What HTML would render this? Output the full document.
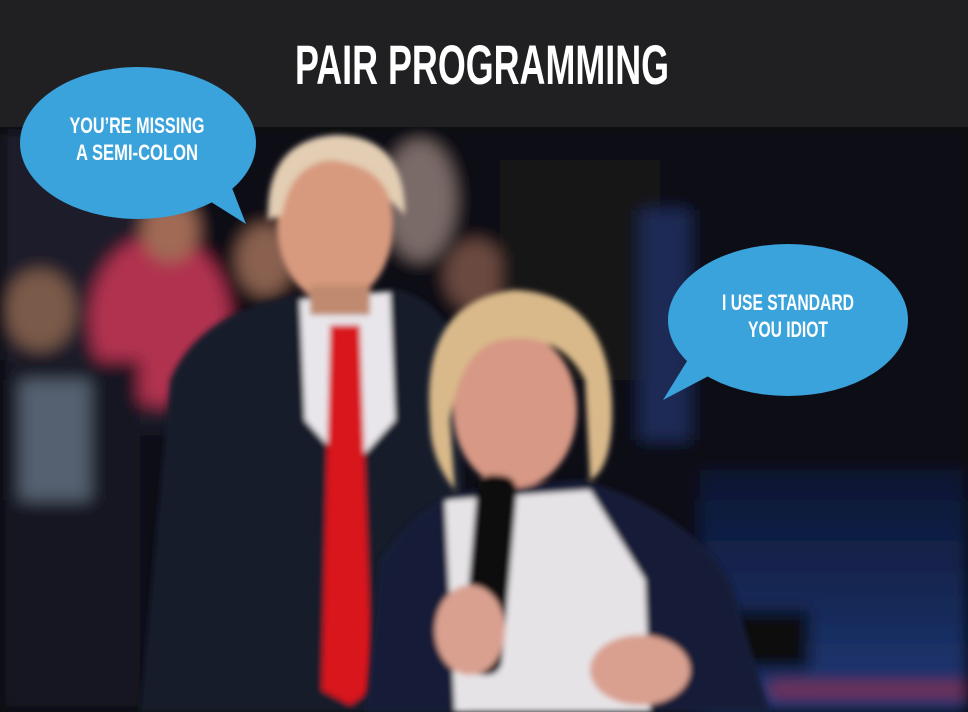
<!DOCTYPE html>
<html><head><meta charset="utf-8"><style>
html,body{margin:0;padding:0;background:#000;}
svg{display:block;}
text{font-family:"Liberation Sans Narrow","Liberation Sans",sans-serif;font-weight:bold;}
</style></head><body>
<svg width="968" height="712" viewBox="0 0 968 712" xmlns="http://www.w3.org/2000/svg">
<defs>
<filter id="b8"><feGaussianBlur stdDeviation="8"/></filter>
<filter id="b3"><feGaussianBlur stdDeviation="3"/></filter>
<linearGradient id="floor" x1="0" y1="0" x2="0" y2="1"><stop offset="0" stop-color="#0c1530"/><stop offset="1" stop-color="#1f3a78"/></linearGradient>
</defs>
<rect width="968" height="712" fill="#05060a"/>
<!-- background -->
<g filter="url(#b8)">
<rect x="0" y="127" width="968" height="585" fill="#0a0c14"/>
<rect x="700" y="470" width="268" height="242" fill="url(#floor)"/>
<rect x="0" y="130" width="200" height="300" fill="#1a1b2a"/>
<ellipse cx="160" cy="320" rx="70" ry="85" fill="#b0304f"/>
<ellipse cx="170" cy="230" rx="28" ry="32" fill="#a06a55"/>
<ellipse cx="40" cy="310" rx="35" ry="40" fill="#7a5a4a"/>
<rect x="0" y="360" width="140" height="352" fill="#141820"/>
<rect x="20" y="380" width="70" height="120" fill="#556070"/>
<ellipse cx="265" cy="260" rx="28" ry="35" fill="#8a6050"/>
<ellipse cx="420" cy="200" rx="35" ry="60" fill="#7a6a68"/>
<ellipse cx="475" cy="275" rx="30" ry="35" fill="#6a4a40"/>
<rect x="500" y="160" width="160" height="220" fill="#141418"/>
<rect x="640" y="210" width="50" height="230" fill="#1a2a55"/>
<rect x="730" y="610" width="80" height="60" fill="#111"/>
<rect x="770" y="685" width="198" height="10" fill="#8a2a3a"/>
</g>
<!-- Trump -->
<g filter="url(#b3)">
<path d="M140 712 L170 380 Q200 310 300 295 L400 290 Q450 305 460 360 L470 712 Z" fill="#151a2c"/>
<path d="M300 300 L390 292 L395 420 L350 470 L305 420 Z" fill="#e8e6ea"/>
<path d="M330 325 L360 325 L372 690 L350 705 L322 690 Z" fill="#d8131c"/>
<ellipse cx="335" cy="225" rx="58" ry="78" fill="#d89a7e"/>
<path d="M268 220 Q265 140 335 135 Q405 135 405 215 L390 200 Q380 165 330 160 Q290 165 282 215 Z" fill="#e3ceb3"/>
<rect x="310" y="285" width="60" height="30" fill="#c08a70"/>
</g>
<!-- Hillary -->
<g filter="url(#b3)">
<path d="M365 712 L380 560 Q420 500 470 490 L580 480 Q680 505 730 580 L770 712 Z" fill="#161d38"/>
<path d="M445 500 L590 490 L645 580 L650 712 L455 712 Z" fill="#e6e3e6"/>
<ellipse cx="515" cy="410" rx="62" ry="78" fill="#d79885"/>
<path d="M430 420 Q420 300 515 290 Q615 295 612 420 Q610 470 590 480 L585 380 Q560 330 500 340 Q460 350 450 420 L455 490 Q430 460 430 420 Z" fill="#d9b98a"/>
<rect x="470" y="475" width="40" height="200" rx="15" fill="#111" transform="rotate(5 490 570)"/>
<ellipse cx="470" cy="630" rx="35" ry="45" fill="#d9a090"/>
<ellipse cx="640" cy="670" rx="50" ry="35" fill="#d9a090"/>
</g>
<!-- header -->
<rect x="0" y="0" width="968" height="127" fill="#202022"/>
<text x="482" y="84" fill="#fff" font-size="56" text-anchor="middle" textLength="374" lengthAdjust="spacingAndGlyphs">PAIR PROGRAMMING</text>
<!-- bubbles -->
<ellipse cx="138" cy="143" rx="118" ry="76" fill="#3aa3dc"/>
<path d="M200 195 L246 224 L225 170 Z" fill="#3aa3dc"/>
<text x="137" y="133" fill="#fff" font-size="22" text-anchor="middle" textLength="135" lengthAdjust="spacingAndGlyphs">YOU’RE MISSING</text>
<text x="137" y="160" fill="#fff" font-size="22" text-anchor="middle" textLength="122" lengthAdjust="spacingAndGlyphs">A SEMI-COLON</text>
<ellipse cx="788" cy="320" rx="120" ry="76" fill="#3aa3dc"/>
<path d="M720 370 L663 400 L700 340 Z" fill="#3aa3dc"/>
<text x="788" y="310" fill="#fff" font-size="22" text-anchor="middle" textLength="132" lengthAdjust="spacingAndGlyphs">I USE STANDARD</text>
<text x="788" y="337" fill="#fff" font-size="22" text-anchor="middle" textLength="80" lengthAdjust="spacingAndGlyphs">YOU IDIOT</text>
</svg>
</body></html>
